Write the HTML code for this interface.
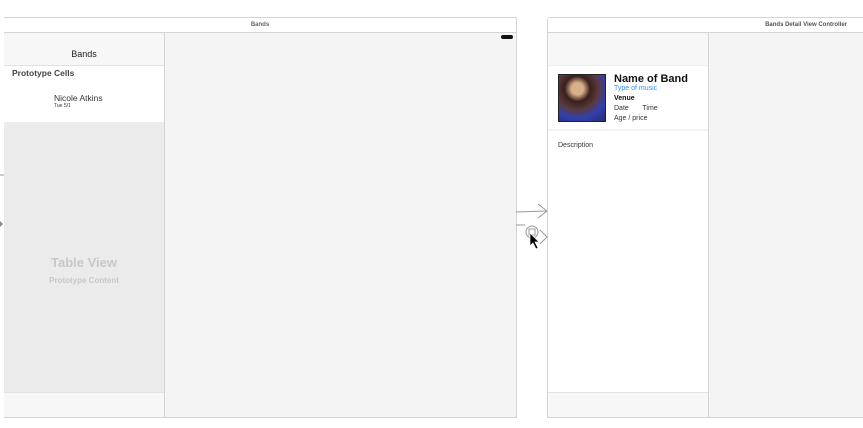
<!DOCTYPE html><html><head><style>
body{margin:0;width:863px;height:428px;background:#fff;position:relative;font-family:"Liberation Sans",sans-serif;overflow:hidden}
div{position:absolute;box-sizing:border-box}
.t{font-size:6px;color:#666;text-align:center;font-weight:bold}
</style></head><body>
<!-- left scene -->
<div style="left:4px;top:17px;width:513px;height:401px;border:1px solid #d4d4d4;border-left:none;background:#f4f4f4"></div>
<div style="left:4px;top:18px;width:512px;height:15px;background:#fff;border-bottom:1px solid #d4d4d4" class="t"><span style="position:relative;top:4px">Bands</span></div>
<div style="left:501px;top:35px;width:12px;height:4px;background:#111;border-radius:2px"></div>
<div style="left:4px;top:33px;width:161px;height:384px;background:#fff;border-right:1px solid #d4d4d4"></div>
<div style="left:4px;top:33px;width:160px;height:33px;background:#f7f7f7;border-bottom:1px solid #e2e2e2;font-size:9px;color:#222;text-align:center;padding-top:16px">Bands</div>
<div style="left:12px;top:68px;font-size:8.5px;font-weight:bold;color:#444">Prototype Cells</div>
<div style="left:54px;top:93px;font-size:8.5px;color:#333">Nicole Atkins</div>
<div style="left:54px;top:103px;font-size:5px;color:#333">Tue 5/1</div>
<div style="left:4px;top:122px;width:160px;height:270px;background:#ebebeb"></div>
<div style="left:4px;top:255px;width:160px;text-align:center;font-size:13px;font-weight:bold;color:#c8c8c8">Table View</div>
<div style="left:4px;top:276px;width:160px;text-align:center;font-size:8px;font-weight:bold;color:#c8c8c8">Prototype Content</div>
<div style="left:4px;top:392px;width:160px;height:25px;background:#f7f7f7;border-top:1px solid #e2e2e2"></div>
<!-- right scene -->
<div style="left:547px;top:17px;width:317px;height:401px;border:1px solid #d4d4d4;border-right:none;border-radius:3px 0 0 0;background:#f4f4f4"></div>
<div style="left:548px;top:18px;width:315px;height:15px;background:#fff;border-bottom:1px solid #d4d4d4;font-size:6px;font-weight:bold;color:#555;text-align:right;padding:4px 16px 0 0">Bands Detail View Controller</div>
<div style="left:548px;top:33px;width:161px;height:384px;background:#fff;border-right:1px solid #d4d4d4"></div>
<div style="left:548px;top:33px;width:160px;height:33px;background:#f7f7f7;border-bottom:1px solid #eee"></div>
<div style="left:558px;top:74px;width:48px;height:48px;border:1px solid #222;background:radial-gradient(circle at 40% 30%,#d8b089 0 14%,#3a1f1c 30%,#5a3a40 50%,#3040b0 70%,#2a2a70)"></div>
<div style="left:614px;top:73px;font-size:11px;font-weight:bold;color:#111">Name of Band</div>
<div style="left:614px;top:85px;font-size:7px;color:#3a8ef6">Type of music</div>
<div style="left:614px;top:95px;font-size:7px;font-weight:bold;color:#111">Venue</div>
<div style="left:614px;top:105px;font-size:7px;color:#333">Date&nbsp;&nbsp;&nbsp;&nbsp;&nbsp;&nbsp;&nbsp;Time</div>
<div style="left:614px;top:115px;font-size:7px;color:#333">Age / price</div>
<div style="left:548px;top:129px;width:160px;height:2px;background:#f2f2f2"></div>
<div style="left:558px;top:142px;font-size:7px;color:#333">Description</div>
<div style="left:548px;top:392px;width:160px;height:25px;background:#f7f7f7;border-top:1px solid #e2e2e2"></div>
<!-- segue arrows -->
<svg style="position:absolute;left:0;top:0" width="863" height="428"><g stroke="#999" fill="none" stroke-width="1">
<path d="M516 212 L546 211 M538 204 L547 211 L538 218"/>
<path d="M516 225 L525 225 M540 230 L547 237 L540 244"/>
<circle cx="532" cy="232" r="6" fill="#fff"/><rect x="529" y="229" width="6" height="6"/>
<path d="M0 175 L4 175"/></g>
<path d="M530 233 L530 246 L533 243 L536 249 L538 248 L535 242 L539 242 Z" fill="#000" stroke="#fff" stroke-width="0.7"/>
<path d="M0 221 L3 224 L0 227Z" fill="#888"/></svg>
</body></html>
